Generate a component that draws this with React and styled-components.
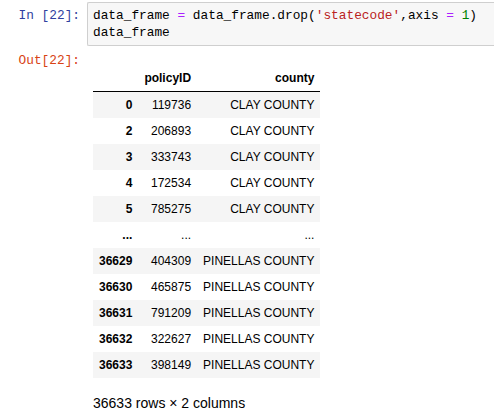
import React from "react";
import styled, { createGlobalStyle } from "styled-components";

const Global = createGlobalStyle`
  html, body { margin: 0; padding: 0; background: #fff; }
  body { font-family: "Liberation Sans", Arial, sans-serif; color: #000; }
`;

const Page = styled.div`
  width: 494px;
  height: 416px;
  overflow: hidden;
  padding-top: 2px;
  box-sizing: border-box;
`;

const Row = styled.div`
  display: flex;
  align-items: flex-start;
`;

const Prompt = styled.div`
  flex: 0 0 87px;
  box-sizing: border-box;
  padding: ${(p) => p.$pad || "5px"} 7px 0 0;
  text-align: right;
  font-family: "Liberation Mono", "DejaVu Sans Mono", monospace;
  font-size: 12.8px;
  line-height: 17px;
  color: ${(p) => p.$color};
`;

const InputBox = styled.div`
  flex: 1;
  background: #f7f7f7;
  border: 1px solid #cfcfcf;
  border-right: none;
  border-radius: 2px 0 0 2px;
  padding: 4px 0 4px 5px;
  font-family: "Liberation Mono", "DejaVu Sans Mono", monospace;
  font-size: 12.8px;
  line-height: 17px;
  white-space: pre;
  color: #000;
`;

const Op = styled.span`
  color: #aa22ff;
`;
const Str = styled.span`
  color: #ba2121;
`;
const Num = styled.span`
  color: #008000;
`;

const OutputRow = styled(Row)`
  margin-top: 6px;
`;

const OutputArea = styled.div`
  flex: 1;
  padding: 13px 0 0 6px;
`;

const Table = styled.table`
  border-collapse: collapse;
  border-spacing: 0;
  font-size: 12px;
  font-family: "Liberation Sans", Arial, sans-serif;
  color: #000;
`;

const Th = styled.th`
  text-align: right;
  vertical-align: middle;
  padding: 6px;
  line-height: 14px;
  font-weight: bold;
`;

const HeadRow = styled.tr`
  border-bottom: 1px solid #000;
`;

const Tr = styled.tr`
  background: ${(p) => (p.$odd ? "#f5f5f5" : "#fff")};
`;

const Td = styled.td`
  text-align: right;
  vertical-align: middle;
  padding: 6px;
  line-height: 14px;
`;

const Footer = styled.p`
  margin: 15px 0 0;
  font-size: 14px;
  line-height: 20px;
  color: #000;
`;

const rows = [
  ["0", "119736", "CLAY COUNTY"],
  ["2", "206893", "CLAY COUNTY"],
  ["3", "333743", "CLAY COUNTY"],
  ["4", "172534", "CLAY COUNTY"],
  ["5", "785275", "CLAY COUNTY"],
  ["...", "...", "..."],
  ["36629", "404309", "PINELLAS COUNTY"],
  ["36630", "465875", "PINELLAS COUNTY"],
  ["36631", "791209", "PINELLAS COUNTY"],
  ["36632", "322627", "PINELLAS COUNTY"],
  ["36633", "398149", "PINELLAS COUNTY"],
];

export default function App() {
  return (
    <Page>
      <Global />
      <Row>
        <Prompt $color="#303f9f">In [22]:</Prompt>
        <InputBox>
          {"data_frame "}
          <Op>=</Op>
          {" data_frame.drop("}
          <Str>'statecode'</Str>
          {",axis "}
          <Op>=</Op>
          {" "}
          <Num>1</Num>
          {")\ndata_frame"}
        </InputBox>
      </Row>
      <OutputRow>
        <Prompt $color="#d84315" $pad="0px">Out[22]:</Prompt>
        <OutputArea>
          <Table>
            <thead>
              <HeadRow>
                <Th></Th>
                <Th>policyID</Th>
                <Th>county</Th>
              </HeadRow>
            </thead>
            <tbody>
              {rows.map((r, i) => (
                <Tr key={i} $odd={i % 2 === 0}>
                  <Th as="th">{r[0]}</Th>
                  <Td>{r[1]}</Td>
                  <Td>{r[2]}</Td>
                </Tr>
              ))}
            </tbody>
          </Table>
          <Footer>36633 rows × 2 columns</Footer>
        </OutputArea>
      </OutputRow>
    </Page>
  );
}
